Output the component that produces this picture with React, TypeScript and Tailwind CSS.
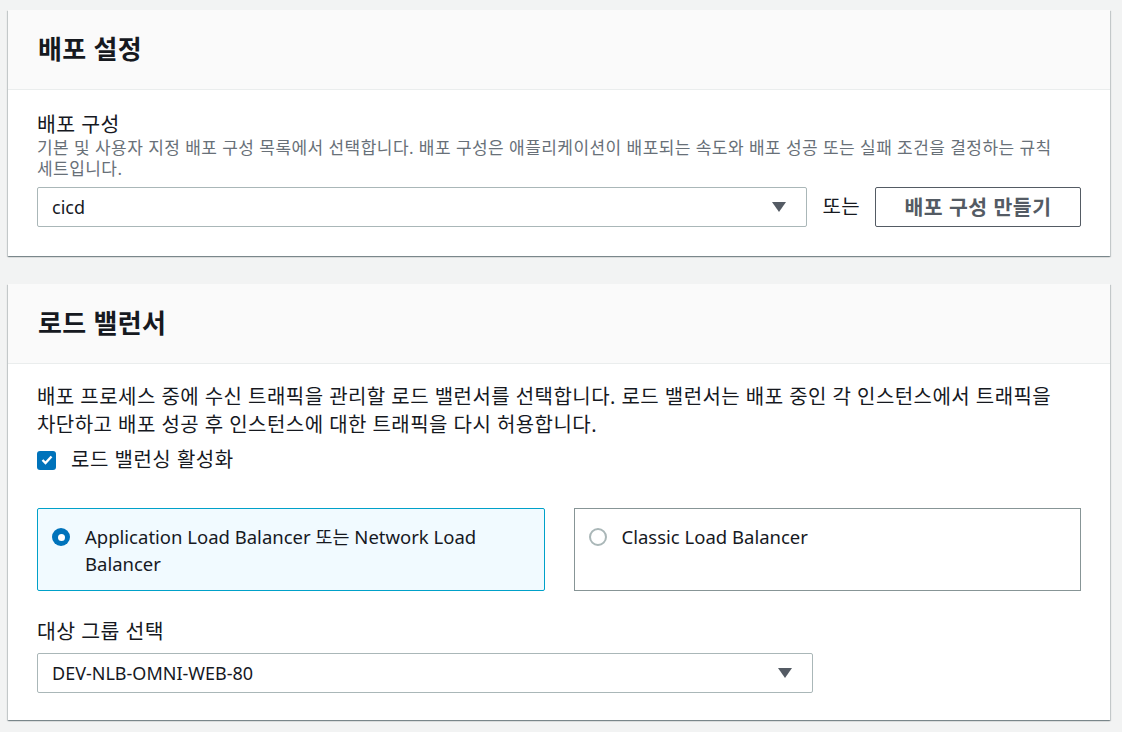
import { useState } from "react";

const font = "font-['Noto_Sans','Noto_Sans_CJK_KR',sans-serif]";

const Caret = () => (
  <svg width="14" height="10" viewBox="0 0 14 10" className="shrink-0">
    <path d="M0 0 H14 L7 10 Z" fill="#545b64" />
  </svg>
);

const Select = ({ value, className }: { value: string; className?: string }) => (
  <div
    className={`flex h-[40px] items-center justify-between rounded-[2px] border border-[#aab7b8] bg-white pl-[14px] pr-[20px] text-[18px] text-[#16191f] ${className ?? ""}`}
  >
    <span>{value}</span>
    <Caret />
  </div>
);

const Radio = ({ checked }: { checked: boolean }) =>
  checked ? (
    <span className="flex h-[18px] w-[18px] shrink-0 items-center justify-center rounded-full bg-[#0073bb]">
      <span className="block h-[7px] w-[7px] rounded-full bg-white" />
    </span>
  ) : (
    <span className="block h-[18px] w-[18px] shrink-0 rounded-full border-2 border-[#aab7b8] bg-white" />
  );

const Card = ({ title, children }: { title: string; children: React.ReactNode }) => (
  <div className="bg-white shadow-[0_1px_1px_0_rgba(0,28,36,0.3),1px_1px_1px_0_rgba(0,28,36,0.15),-1px_1px_1px_0_rgba(0,28,36,0.15)]">
    <div className="flex h-[80px] items-center border-b border-[#eaeded] bg-[#fafafa] px-[30px]">
      <h2 className="text-[26px] font-bold tracking-[0.3px] text-[#16191f]">{title}</h2>
    </div>
    {children}
  </div>
);

export default function App() {
  const [lbType, setLbType] = useState<"alb" | "clb">("alb");

  return (
    <div className={`min-h-screen bg-[#f2f3f3] pl-2 pr-3 pt-[10px] ${font}`}>
      <Card title="배포 설정">
        <div className="px-[29px] pb-[29px] pt-[21px]">
          <div className="text-[20.5px] leading-[26px] tracking-[0.4px] text-[#16191f]">배포 구성</div>
          <p className="break-keep text-[17px] leading-[21px] tracking-[0.45px] text-[#687078]">
            기본 및 사용자 지정 배포 구성 목록에서 선택합니다. 배포 구성은 애플리케이션이 배포되는
            속도와 배포 성공 또는 실패 조건을 결정하는 규칙 세트입니다.
          </p>
          <div className="mt-2 flex items-center gap-[15px]">
            <Select value="cicd" className="flex-1" />
            <span className="text-[20px] tracking-[0.4px] text-[#16191f]">또는</span>
            <button className="h-[40px] w-[206px] rounded-[2px] border border-[#545b64] bg-white text-[20.5px] font-bold tracking-[0.5px] text-[#545b64]">
              배포 구성 만들기
            </button>
          </div>
        </div>
      </Card>

      <div className="mt-7">
        <Card title="로드 밸런서">
          <div className="px-[29px] pb-[27px] pt-[19px]">
            <p className="break-keep text-[20px] leading-[28px] tracking-[0.45px] text-[#16191f]">
              배포 프로세스 중에 수신 트래픽을 관리할 로드 밸런서를 선택합니다. 로드 밸런서는 배포
              중인 각 인스턴스에서 트래픽을 차단하고 배포 성공 후 인스턴스에 대한 트래픽을 다시
              허용합니다.
            </p>
            <label className="mt-[7px] flex items-center gap-[15px] text-[20px] leading-[28px] tracking-[0.5px] text-[#16191f]">
              <span className="flex h-[19px] w-[19px] items-center justify-center rounded-[3px] bg-[#0073bb]">
                <svg width="12" height="10" viewBox="0 0 12 10">
                  <path d="M1.5 5 L4.5 8 L10.5 1.5" fill="none" stroke="white" strokeWidth="2.4" />
                </svg>
              </span>
              로드 밸런싱 활성화
            </label>

            <div className="mt-[34px] grid grid-cols-2 gap-[29px]">
              <div
                onClick={() => setLbType("alb")}
                className={`flex gap-[15px] px-[14px] pb-[13px] pt-[14px] text-[18.5px] leading-[27px] text-[#16191f] ${
                  lbType === "alb"
                    ? "rounded-[2px] border border-[#00a1c9] bg-[#f1faff]"
                    : "border border-[#879596] bg-white"
                }`}
              >
                <span className="mt-[5px]">
                  <Radio checked={lbType === "alb"} />
                </span>
                <span>Application Load Balancer 또는 Network Load Balancer</span>
              </div>
              <div
                onClick={() => setLbType("clb")}
                className={`flex gap-[15px] px-[14px] pb-[13px] pt-[14px] text-[18.5px] leading-[27px] text-[#16191f] ${
                  lbType === "clb"
                    ? "rounded-[2px] border border-[#00a1c9] bg-[#f1faff]"
                    : "border border-[#879596] bg-white"
                }`}
              >
                <span className="mt-[5px]">
                  <Radio checked={lbType === "clb"} />
                </span>
                <span>Classic Load Balancer</span>
              </div>
            </div>

            <div className="mt-[27px] text-[20.5px] leading-[26px] tracking-[0.4px] text-[#16191f]">대상 그룹 선택</div>
            <Select value="DEV-NLB-OMNI-WEB-80" className="mt-[9px] w-[776px]" />
          </div>
        </Card>
      </div>
    </div>
  );
}
